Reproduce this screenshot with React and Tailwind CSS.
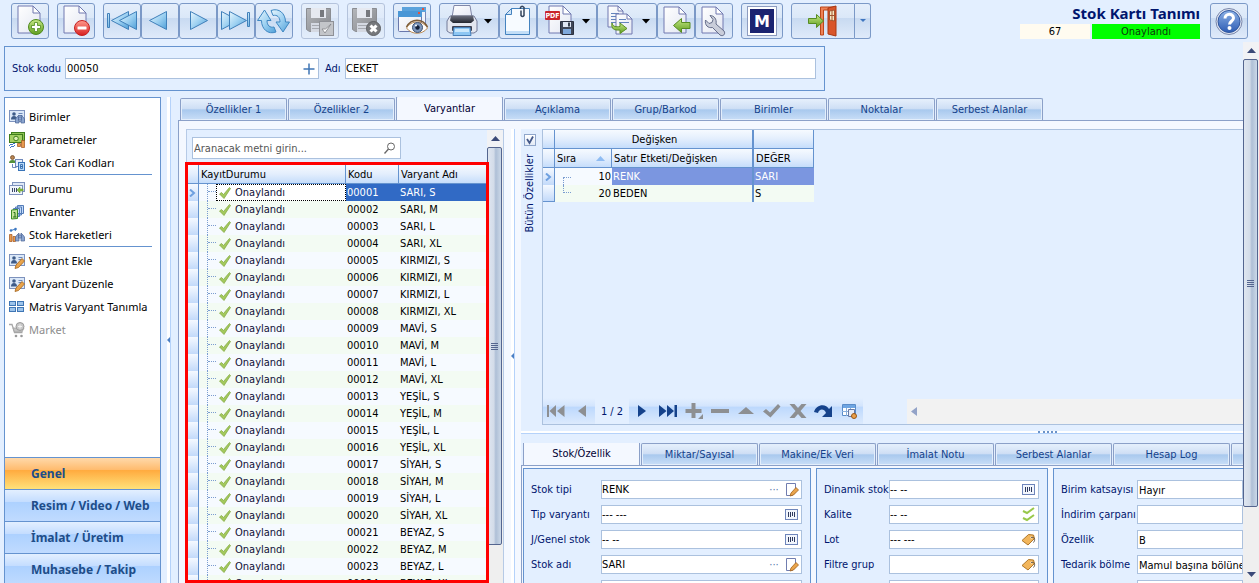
import React from "react";

const UI = "font-['DejaVu_Sans_Condensed','DejaVu_Sans',sans-serif]";
const SEGOE = "font-['Noto_Sans','Open_Sans',sans-serif]";

/* ---------- shared svg gradients ---------- */
function Defs() {
  return (
    <svg width="0" height="0" className="absolute" aria-hidden="true">
      <defs>
        <linearGradient id="page" x1="0" y1="0" x2="1" y2="1">
          <stop offset="0" stopColor="#ffffff" />
          <stop offset="1" stopColor="#e2e6f2" />
        </linearGradient>
        <linearGradient id="blue" x1="0" y1="0" x2="1" y2="1">
          <stop offset="0" stopColor="#e8f6fd" />
          <stop offset="0.5" stopColor="#9fd2f2" />
          <stop offset="1" stopColor="#4f9fd8" />
        </linearGradient>
        <linearGradient id="green" x1="0" y1="0" x2="0" y2="1">
          <stop offset="0" stopColor="#c6e886" />
          <stop offset="1" stopColor="#5f9e1e" />
        </linearGradient>
        <linearGradient id="red" x1="0" y1="0" x2="0" y2="1">
          <stop offset="0" stopColor="#ff9a8e" />
          <stop offset="1" stopColor="#d81e1e" />
        </linearGradient>
        <linearGradient id="grey" x1="0" y1="0" x2="1" y2="1">
          <stop offset="0" stopColor="#b5b7bb" />
          <stop offset="1" stopColor="#85878c" />
        </linearGradient>
        <linearGradient id="help" x1="0" y1="0" x2="0" y2="1">
          <stop offset="0" stopColor="#8db2e6" />
          <stop offset="1" stopColor="#2d5cb4" />
        </linearGradient>
        <linearGradient id="dark" x1="0" y1="0" x2="0" y2="1">
          <stop offset="0" stopColor="#6e7280" />
          <stop offset="1" stopColor="#22252e" />
        </linearGradient>
      </defs>
    </svg>
  );
}

function Page({ x = 6, y = 2, w = 22, h = 27, fold = 7 }) {
  return (
    <g stroke="#7079b0" strokeWidth="1" strokeLinejoin="round">
      <path d={`M${x} ${y}h${w - fold}l${fold} ${fold}v${h - fold}h${-w}z`} fill="url(#page)" />
      <path d={`M${x + w - fold} ${y}v${fold}h${fold}z`} fill="#fff" />
    </g>
  );
}

function Svg({ w = 36, h = 34, children }) {
  return (
    <svg width={w} height={h} viewBox={`0 0 ${w} ${h}`} className="block" aria-hidden="true">
      {children}
    </svg>
  );
}

const Floppy = () => (
  <g>
    <path d="M4.5 4.5h24v23h-21l-3-2z" fill="url(#grey)" stroke="#8b8d92" />
    <rect x="9" y="4" width="15" height="10" fill="#e6e9f0" />
    <rect x="18" y="6" width="4" height="7" fill="#77797e" />
    <rect x="9" y="19" width="14" height="9" fill="#d5d9e2" />
    <path d="M10 21.500h11M10 24.500h11" stroke="#a6a9b0" />
  </g>
);

const Down = ({ x }) => <path d={`M${x} 15h8l-4 4.500z`} fill="#000" />;

const tool = {
  add: (
    <Svg>
      <Page />
      <circle cx="24" cy="23" r="7.500" fill="url(#green)" stroke="#4f8a1c" />
      <path d="M22.500 18.500h3v3h3v3h-3v3h-3v-3h-3v-3h3z" fill="#fff" stroke="#4f8a1c" strokeWidth="0.800" />
    </Svg>
  ),
  remove: (
    <Svg>
      <Page />
      <circle cx="24" cy="24" r="7.500" fill="url(#red)" stroke="#c42020" />
      <rect x="19.500" y="22.500" width="9" height="3" rx="0.500" fill="#fff" />
    </Svg>
  ),
  first: (
    <Svg>
      <g fill="url(#blue)" stroke="#4080ba" strokeLinejoin="round">
        <rect x="3.500" y="9.500" width="2" height="14" />
        <path d="M24.500 7.500v18l-17-9z" />
        <path d="M32.500 7.500v18l-17-9z" />
      </g>
    </Svg>
  ),
  prev: (
    <Svg>
      <path d="M24.500 7.500v18l-17-9z" fill="url(#blue)" stroke="#4080ba" strokeLinejoin="round" />
    </Svg>
  ),
  next: (
    <Svg>
      <path d="M10.500 7.500v18l17-9z" fill="url(#blue)" stroke="#4080ba" strokeLinejoin="round" />
    </Svg>
  ),
  last: (
    <Svg>
      <g fill="url(#blue)" stroke="#4080ba" strokeLinejoin="round">
        <path d="M3.500 7.500v18l17-9z" />
        <path d="M11.500 7.500v18l17-9z" />
        <rect x="29.500" y="8.500" width="2" height="14" />
      </g>
    </Svg>
  ),
  refresh: (
    <Svg>
      <g fill="url(#blue)" stroke="#3f87c2" strokeLinejoin="round">
        <path d="M15 6.500c8-3 14.500 3 14.500 11.500h4l-6.500 10-7-10h4c0-5-3-7.500-7-6.500z" />
        <path d="M20 28c-8 3-14.500-3-14.500-11.500h-4l7-10.500 6.500 10.500h-4c0 5 3 7.500 7 6.500z" />
      </g>
    </Svg>
  ),
  save: (
    <Svg>
      <Floppy />
      <rect x="17.500" y="17.500" width="14" height="14" fill="#c3c5c9" stroke="#8e9096" />
      <path d="M20 25l3 4 6-9-5.500 5z" fill="#fff" stroke="#808287" strokeWidth="0.800" />
    </Svg>
  ),
  saveCancel: (
    <Svg>
      <Floppy />
      <circle cx="25.500" cy="24.500" r="7" fill="#77797d" stroke="#5e6064" />
      <path d="M22.500 21.500l6 6M28.500 21.500l-6 6" stroke="#fff" strokeWidth="3" />
    </Svg>
  ),
  preview: (
    <Svg>
      <rect x="8.500" y="3.500" width="23" height="20" rx="1" fill="#eef3fb" stroke="#7686b6" />
      <rect x="8" y="3" width="24" height="5" fill="#5ba3dc" />
      <rect x="4.500" y="7.500" width="23" height="20" rx="1" fill="url(#page)" stroke="#6a78ac" />
      <rect x="4" y="7" width="24" height="6" fill="#4a97d6" />
      <rect x="24" y="8" width="2" height="2" fill="#e5533d" />
      <rect x="28" y="4" width="2" height="2" fill="#e5533d" />
      <path d="M12.500 24c5-8 16-8 21 0-5 7-16 7-21 0z" fill="#fff" stroke="#b98a54" />
      <path d="M12.500 23c5-9 16-9 21 0" fill="none" stroke="#7c5c38" strokeWidth="1.500" />
      <circle cx="23.500" cy="23.500" r="5" fill="#7d97bd" stroke="#3e5373" />
      <circle cx="23.500" cy="23.500" r="2.200" fill="#12203a" />
      <circle cx="22" cy="21.500" r="1" fill="#fff" />
    </Svg>
  ),
  print: (
    <Svg w={58}>
      <path d="M14 1.500h16l2 12h-20z" fill="url(#page)" stroke="#8087a8" />
      <path d="M10 12h24l3 5v10l-3 2h-24l-3-2v-10z" fill="#e3e6ef" stroke="#737b99" />
      <path d="M11 11.500h22l1 5-3 2.500h-18l-3-2.500z" fill="url(#dark)" />
      <rect x="12" y="22" width="20" height="5" rx="1" fill="#3e4253" />
      <path d="M14 23.500h16l1 8h-18z" fill="#8dc6f3" stroke="#477fb8" />
      <path d="M15 25h14v3h-14z" fill="#cbe7fb" />
      <Down x={44} />
    </Svg>
  ),
  clip: (
    <Svg>
      <path d="M5.500 10.500l6-6h18v26h-24z" fill="#f7fbff" stroke="#4583bf" />
      <path d="M6 27h23v3h-23z" fill="#c3def7" />
      <path d="M5.500 10.500h6v-6z" fill="#cfe4f7" stroke="#4583bf" />
      <path d="M24 3v8.500M20.500 5v-1.500q1.500-2.500 3.500 0v8q-1.500 2-3 0v-5" fill="none" stroke="#34455e" strokeWidth="1.500" />
    </Svg>
  ),
  pdf: (
    <Svg w={58}>
      <Page x={11} y={2} w={22} h={27} fold={8} />
      <rect x="7" y="7" width="15" height="9" rx="1" fill="#c9252b" />
      <text x="14.500" y="14" textAnchor="middle" fontSize="7" fontWeight="700" fill="#fff" className="font-['DejaVu_Sans_Condensed',sans-serif]">PDF</text>
      <path d="M22.500 17.500h13v13h-11.500l-1.500-1.500z" fill="#3f4657" stroke="#2b3040" />
      <rect x="25" y="18" width="8" height="5" fill="#dfe6f3" />
      <rect x="30" y="18.500" width="2" height="4" fill="#39404f" />
      <rect x="25" y="25" width="8" height="5" fill="#7fa9dc" />
      <Down x={44} />
    </Svg>
  ),
  copy: (
    <Svg w={58}>
      <Page x={10} y={2} w={15} h={21} fold={5} />
      <path d="M13 9.500h8M13 12.500h8M13 15.500h8M13 18.500h8" stroke="#6484bd" />
      <Page x={18} y={10} w={16} h={20} fold={5} />
      <path d="M21 15.500h7M21 18.500h10" stroke="#6484bd" />
      <path d="M14 19c1 4 4 4 8 3.500v-3.500l7 5.500-7 5v-3.500c-6 .5-9-1-8-7z" fill="url(#green)" stroke="#5a8f24" />
      <Down x={44} />
    </Svg>
  ),
  importDoc: (
    <Svg>
      <Page x={6} y={3} w={22} h={26} />
      <path d="M15.500 21.500l8-7v4h8.500v6h-8.500v4z" fill="url(#green)" stroke="#568c22" strokeLinejoin="round" />
    </Svg>
  ),
  wrench: (
    <Svg>
      <Page x={6} y={3} w={21} h={26} />
      <path d="M14 11.500l3 4-1 3-3 1-3.500-3.500c-1 5 2.500 8.500 7 7.500l7.500 7.500c3 2 6-1 4-4l-8-7c1-5-2-8.500-6-8.500z" fill="#c9cdda" stroke="#656d8a" strokeLinejoin="round" />
    </Svg>
  ),
  exit: (
    <Svg w={62}>
      <path d="M28.500 31v-28h15v3h-12v25z" fill="#ee8256" stroke="#bd4719" />
      <path d="M36 4l8-2v30l-8-2z" fill="#d9552a" stroke="#a93812" />
      <path d="M37.500 7l5-1v11l-5-1z" fill="#f6e7c0" stroke="#a3552e" />
      <path d="M40 7v9.500M37.500 11.500h5" stroke="#a3552e" />
      <path d="M16.500 14.500h8v-4l7 6.500-7 6.500v-4h-8z" fill="url(#green)" stroke="#568c22" strokeLinejoin="round" />
    </Svg>
  ),
  help: (
    <Svg>
      <circle cx="18" cy="17.500" r="13" fill="#dfe5f1" stroke="#7a87aa" />
      <circle cx="18" cy="17.500" r="11" fill="url(#help)" stroke="#2f569e" />
      <path d="M14 14.500c0-5.500 8.500-5.500 8.500-.5 0 3-4 3.500-4 6.500" fill="none" stroke="#fff" strokeWidth="3" />
      <circle cx="18.500" cy="24" r="2" fill="#fff" />
    </Svg>
  ),
};

const BTN =
  "h-9 shrink-0 flex items-center justify-center rounded-[3px] border border-[#7b99c7] bg-[linear-gradient(#e4eefb_0%,#dbe8f8_40%,#c8daf1_42%,#dfeafa_100%)]";
const BTN_OFF =
  "h-9 shrink-0 flex items-center justify-center rounded-[3px] border border-[#b4c3dc] bg-[linear-gradient(#e6effb_0%,#dfeafa_40%,#d6e3f5_42%,#e3edfb_100%)]";

function ToolButton({ label, children, className = "w-[38px]", off }) {
  return (
    <button type="button" aria-label={label} disabled={off} className={(off ? BTN_OFF : BTN) + " " + className}>
      {children}
    </button>
  );
}

function Toolbar() {
  return (
    <header className="flex h-[42px] shrink-0 items-start justify-between pt-[3px] pr-[11px] pl-[11px]">
      <div className="flex gap-2">
        <ToolButton label="Yeni">{tool.add}</ToolButton>
        <ToolButton label="Sil">{tool.remove}</ToolButton>
        <div className="flex">
          <ToolButton label="İlk">{tool.first}</ToolButton>
          <ToolButton label="Önceki">{tool.prev}</ToolButton>
          <ToolButton label="Sonraki">{tool.next}</ToolButton>
          <ToolButton label="Son">{tool.last}</ToolButton>
          <ToolButton label="Yenile">{tool.refresh}</ToolButton>
        </div>
        <ToolButton label="Kaydet" off>{tool.save}</ToolButton>
        <ToolButton label="Vazgeç" off>{tool.saveCancel}</ToolButton>
        <ToolButton label="Önizleme">{tool.preview}</ToolButton>
        <div className="flex">
          <ToolButton label="Yazdır" className="w-[60px]">{tool.print}</ToolButton>
          <ToolButton label="Ekler">{tool.clip}</ToolButton>
          <ToolButton label="PDF kaydet" className="w-[60px]">{tool.pdf}</ToolButton>
          <ToolButton label="Kopyala" className="w-[60px]">{tool.copy}</ToolButton>
          <ToolButton label="İçe al">{tool.importDoc}</ToolButton>
          <ToolButton label="Ayarlar">{tool.wrench}</ToolButton>
        </div>
        <ToolButton label="M" className="w-[42px]">
          <span className="flex size-[30px] items-center justify-center border border-[#8d9cc0] bg-white">
            <span className="flex size-[24px] items-center justify-center bg-[#1a2370] font-['DejaVu_Sans',sans-serif] text-[16px] font-bold text-white">M</span>
          </span>
        </ToolButton>
        <div className="flex">
          <ToolButton label="Çıkış" className="w-[64px] rounded-r-none">{tool.exit}</ToolButton>
          <ToolButton label="Çıkış seçenekleri" className="w-[16px] rounded-l-none border-l-0">
            <svg width="6" height="4" viewBox="0 0 6 4" aria-hidden="true"><path d="M0 0h6l-3 3z" fill="#3f76c0" /></svg>
          </ToolButton>
        </div>
      </div>
      <div className="flex gap-[10px]">
        <div className="flex flex-col items-end">
          <h1 className={SEGOE + " h-[21px] text-[15px] leading-[20px] font-bold text-[#00156e]"}>Stok Kartı Tanımı</h1>
          <div className="flex gap-0.5 text-center leading-[15px]">
            <span className="h-[15px] w-[70px] bg-[#fffbf0] text-black">67</span>
            <span className="h-[15px] w-[108px] bg-[#00ff00] text-[#0c3a0c]">Onaylandı</span>
          </div>
        </div>
        <ToolButton label="Yardım">{tool.help}</ToolButton>
      </div>
    </header>
  );
}

/* ---------- scroll bars ---------- */
function VScroll({ thumb, down }) {
  return (
    <div className="flex w-4 shrink-0 flex-col bg-[#efefef]" aria-hidden="true">
      <div className="flex h-[17px] shrink-0 items-center justify-center bg-[#f1f2f5]">
        <svg width="9" height="5" viewBox="0 0 9 5"><path d="M0 5h9L4.500 0z" fill="#3b4a78" /></svg>
      </div>
      <div className={"mr-px flex items-center justify-center rounded-[2px] border border-[#54658f] bg-[linear-gradient(90deg,#dfe6f0_0%,#d3dce9_45%,#aebfd6_60%,#cbd8e8_100%)] " + thumb}>
        <svg width="7" height="7" viewBox="0 0 7 7"><path d="M0 .5h7M0 2.500h7M0 4.500h7M0 6.500h7" stroke="#54658f" /></svg>
      </div>
      {down && (
        <div className="mt-auto flex h-[17px] shrink-0 items-center justify-center">
          <svg width="9" height="5" viewBox="0 0 9 5"><path d="M0 0h9L4.500 5z" fill="#3b4a78" /></svg>
        </div>
      )}
    </div>
  );
}

/* ---------- side navigation ---------- */
const Card = () => (
  <g>
    <rect x="0.500" y="1.500" width="15" height="11" fill="#dbe8f8" stroke="#7d92bd" />
    <circle cx="5" cy="5" r="1.800" fill="#3d5b88" />
    <path d="M2 10.500q0-3.500 3-3.500t3 3.500z" fill="#3d5b88" />
    <path d="M9.500 4.500h4M9.500 6.500h4" stroke="#6c88b8" />
  </g>
);
const Binos = () => (
  <g fill="#8ba5cf" stroke="#4a6496" strokeWidth="0.700">
    <path d="M8 8l2-2v8h-3.500v-4zM14 8l-2-2v8h3.500v-4z" />
    <rect x="9.500" y="8" width="3" height="3" />
  </g>
);
const Pencil = () => (
  <path d="M6 15.500l1-3.500 6-6.500 2.500 2.500-6 6.500z" fill="#e9a44b" stroke="#a3621b" strokeWidth="0.800" />
);

const navIcon = {
  birim: (<><Card /><Binos /></>),
  param: (
    <>
      <rect x="2.500" y="0.500" width="13" height="8" fill="#8cc152" stroke="#3f7d1c" />
      <rect x="0.500" y="2.500" width="13" height="8" fill="#a4d065" stroke="#3f7d1c" />
      <circle cx="7" cy="6.500" r="2.300" fill="#dff0b8" stroke="#3f7d1c" />
      <path d="M8.500 14.500v-3h3v3zM12.500 15.500v-7h3v7z" fill="#e89a4d" stroke="#a2551c" strokeWidth="0.700" />
      <path d="M0 14l2-2 1 1 2-2 1 1M1 16l2-2 1 1 2-2" fill="none" stroke="#3b73c5" />
    </>
  ),
  cari: (
    <>
      <circle cx="3.500" cy="2.500" r="2" fill="#b78352" stroke="#67431f" strokeWidth="0.700" />
      <path d="M0 8q0-3 3.500-3t3.500 3z" fill="#55913a" />
      <rect x="6.500" y="4.500" width="7" height="7" fill="#e8effa" stroke="#7089bb" />
      <rect x="9.500" y="7.500" width="6" height="8" fill="#b9d8f6" stroke="#3974b8" />
      <path d="M11.500 9.500h2v2h-2zM11.500 11.500h2v2h-2z" fill="none" stroke="#2a62a6" strokeWidth="0.800" />
      <path d="M3.500 9v3.500h4" fill="none" stroke="#7089bb" />
    </>
  ),
  durum: (
    <>
      <rect x="3.500" y="1.500" width="12" height="9" fill="#dfe8f6" stroke="#7d92bd" />
      <rect x="0.500" y="4.500" width="13" height="9" fill="#f1f5fc" stroke="#7d92bd" />
      <path d="M3.500 7v4M5.500 7v4M7.500 7v4" stroke="#3a4766" />
      <path d="M8 9l3-3v2h3v2h-3v2z" fill="#85bd3e" stroke="#5b8f24" strokeWidth="0.500" />
    </>
  ),
  envanter: (
    <>
      <path d="M8.500 1.500h6v8h-6zM6.500 3h6v8h-6zM4.500 4.500h6v8h-6z" fill="#c2dafa" stroke="#547cb8" />
      <path d="M2.500 6l6-.5v9l-6 .5z" fill="#c5e59a" stroke="#3c8a24" />
      <path d="M4.500 8.500h1.500v4.500M4 13h3.500" fill="none" stroke="#246d14" />
    </>
  ),
  hareket: (
    <>
      <path d="M2 3.500l3-1 2 1" fill="none" stroke="#3d79c2" />
      <circle cx="2" cy="3.500" r="1.300" fill="#3d79c2" /><circle cx="6.500" cy="2" r="1.300" fill="#3d79c2" />
      <path d="M.5 14.500v-7h2.500v7zM4 14.500v-5h2.500v5z" fill="#e89a4d" stroke="#a2551c" strokeWidth="0.700" />
      <Binos />
    </>
  ),
  kalem: (<><Card /><Pencil /></>),
  matris: (
    <g fill="#9cc3ea" stroke="#3f76b5">
      <rect x="0.500" y="2.500" width="6" height="4" /><rect x="8.500" y="2.500" width="6" height="4" />
      <rect x="0.500" y="8.500" width="6" height="4" /><rect x="8.500" y="8.500" width="6" height="4" />
    </g>
  ),
  market: (
    <>
      <path d="M0 2.500h3l2.500 8h8" fill="none" stroke="#a9a9a9" strokeWidth="1.300" />
      <path d="M4 6h11l-2 4h-7.500z" fill="#c4c4c4" stroke="#9e9e9e" strokeWidth="0.700" />
      <circle cx="11" cy="4.500" r="4" fill="#c9c9c9" stroke="#9c9c9c" />
      <path d="M9 4.500h4M11 2.500v4" stroke="#f2f2f2" />
      <circle cx="7" cy="14" r="1.300" fill="#999" /><circle cx="12.500" cy="14" r="1.300" fill="#999" />
    </>
  ),
};

const NAV = [
  [["birim", "Birimler"], ["param", "Parametreler"], ["cari", "Stok Cari Kodları"]],
  [["durum", "Durumu"], ["envanter", "Envanter"], ["hareket", "Stok Hareketleri"]],
  [["kalem", "Varyant Ekle"], ["kalem", "Varyant Düzenle"], ["matris", "Matris Varyant Tanımla"], ["market", "Market"]],
];

const GROUPS = ["Genel", "Resim / Video / Web", "İmalat / Üretim", "Muhasebe / Takip"];

function SideNav() {
  return (
    <aside className={SEGOE + " flex w-[157px] shrink-0 flex-col border border-b-0 border-[#6593cf] bg-white"}>
      <nav className="flex flex-1 flex-col pt-[7px] text-[11px]">
        {NAV.map((group, g) => (
          <ul key={g} className={g < 2 ? "mb-0.5" : ""}>
            {group.map(([icon, label]) => (
              <li key={label}>
                <a href="#" className={"flex h-[23px] items-center gap-1 pl-[4px] whitespace-nowrap " + (icon === "market" ? "text-[#8d8d8d]" : "text-black")}>
                  <svg width="16" height="16" viewBox="0 0 16 16" className="shrink-0" aria-hidden="true">{navIcon[icon]}</svg>
                  {label}
                </a>
              </li>
            ))}
            {g < 2 && <li aria-hidden="true" className="mr-2 ml-6 h-px bg-[#6593cf]" />}
          </ul>
        ))}
      </nav>
      <div className="h-[126px] shrink-0">
        {GROUPS.map((g, i) => (
          <button
            key={g}
            type="button"
            className={
              "flex h-8 w-full items-center border-t border-[#6593cf] pl-[26px] text-[12px] font-bold whitespace-nowrap text-[#204d89] " +
              (i === 0
                ? "bg-[linear-gradient(#ffd9aa_0%,#ffbb6e_38%,#ffab3f_40%,#fee17a_100%)]"
                : "bg-[linear-gradient(#e3efff_0%,#c4ddff_38%,#add1ff_40%,#c0dbff_100%)]")
            }
          >
            {g}
          </button>
        ))}
      </div>
    </aside>
  );
}

/* ---------- tabs ---------- */
function Tabs({ items, active, width, className }) {
  return (
    <div role="tablist" className={"flex shrink-0 items-end gap-px overflow-hidden " + className}>
      {items.map((t, i) => (
        <button
          key={i}
          type="button"
          role="tab"
          aria-selected={i === active}
          className={
            "shrink-0 rounded-t-[2px] border border-b-0 border-[#8ba0c8] text-center " + width + " " +
            (i === active
              ? "h-[24px] bg-[#f4f8ff] text-[#000033]"
              : "h-[22px] bg-[linear-gradient(#e6f0fc_0%,#cfdff5_45%,#a9c9ee_52%,#c9def7_100%)] text-[#15428b] shadow-[inset_0_0_0_1px_#e3eefb]")
          }
        >
          {t}
        </button>
      ))}
    </div>
  );
}

/* ---------- variant list ---------- */
const COLORS = ["SARI", "KIRMIZI", "MAVİ", "YEŞİL", "SİYAH", "BEYAZ"];
const SIZES = ["S", "M", "L", "XL"];
const VARIANTS = COLORS.flatMap((c) => SIZES.map((s) => `${c}, ${s}`)).map((name, i) => ({
  code: String(i + 1).padStart(5, "0"),
  name,
}));

const HEAD = "border-r border-b border-[#6593cf] bg-[linear-gradient(#f6faff_0%,#e3eefd_50%,#c5ddfb_100%)] p-0 pl-0.5 text-left font-normal text-black whitespace-nowrap";
const GUTTER = "border-r border-[#6593cf] bg-[linear-gradient(#f5f9ff_0%,#c3dafa_100%)] p-0";

const Pointer = () => (
  <svg width="7" height="8" viewBox="0 0 7 8" className="mx-auto block" aria-hidden="true"><path d="M1 .5L5 4 1 7.500" fill="none" stroke="#6ea0e0" strokeWidth="2" /></svg>
);
const Tick = () => (
  <svg width="12" height="12" viewBox="0 0 12 12" className="shrink-0" aria-hidden="true">
    <path d="M.5 7l2-1.500 2 2L10.500.5 11.500 1.500 5 11.500z" fill="#a3c95c" stroke="#86ab48" strokeWidth="0.800" />
  </svg>
);

function VariantTable() {
  return (
    <table className="w-full table-fixed border-separate border-spacing-0">
      <colgroup>
        <col className="w-[12px]" />
        <col className="w-[147px]" />
        <col className="w-[53px]" />
        <col />
      </colgroup>
      <thead>
        <tr className="h-[19px]">
          <th className={HEAD} aria-label="İşaret" />
          <th className={HEAD}>KayıtDurumu</th>
          <th className={HEAD}>Kodu</th>
          <th className={HEAD}>Varyant Adı</th>
        </tr>
      </thead>
      <tbody>
        {VARIANTS.map((v, i) => (
          <tr key={v.code} className={"h-[17px] " + (i === 0 ? "bg-[#316ac5] text-white" : i % 2 ? "bg-[#f3fbf3] text-black" : "bg-[#f6faff] text-black")}>
            <td className={GUTTER}>{i === 0 && <Pointer />}</td>
            <td className={"p-0 text-[#101038] " + (i === 0 ? "bg-[#f6faff]" : "")}>
              <div className="flex h-[17px] pl-2">
                <span className="w-px border-l border-dotted border-[#7a9cd0]" />
                <span className="h-2 w-2 border-b border-dotted border-[#7a9cd0]" />
                <span className={"flex flex-1 items-center gap-1 border border-dotted pl-0.5 " + (i === 0 ? "border-black bg-white" : "border-transparent")}>
                  <Tick />
                  Onaylandı
                </span>
              </div>
            </td>
            <td className="p-0 pl-px">{v.code}</td>
            <td className="p-0 pl-px">{v.name}</td>
          </tr>
        ))}
      </tbody>
    </table>
  );
}

function VariantPanel() {
  return (
    <section className="flex w-[318px] shrink-0 border border-b-0 border-[#b6cae6] bg-[#e3efff]">
      <div className="flex min-w-0 flex-1 flex-col">
        <div className="mt-[7px] mr-[86px] mb-[3px] ml-[5px] flex h-[22px] shrink-0 items-center border border-[#abc1de] bg-white">
          <input aria-label="Ara" placeholder="Aranacak metni girin..." className="min-w-0 flex-1 pl-px outline-none placeholder:text-[#555]" />
          <svg width="12" height="12" viewBox="0 0 12 12" className="mr-1 shrink-0" aria-hidden="true">
            <circle cx="7" cy="4.500" r="3.500" fill="none" stroke="#666" /><path d="M4.500 7l-4 4.500" stroke="#666" strokeWidth="1.300" />
          </svg>
        </div>
        <div className="relative flex min-h-0 flex-1 flex-col pt-[3px]">
          <div className="min-h-0 flex-1 overflow-hidden bg-white">
            <VariantTable />
          </div>
          <div className="pointer-events-none absolute inset-y-0 -right-0.5 -left-0.5 border-[3px] border-[#ff0000]" />
        </div>
      </div>
      <VScroll thumb="h-[398px]" />
    </section>
  );
}

function VSplit() {
  return (
    <div className="flex w-1 shrink-0 items-center border-r border-[#b5d2fa] bg-white" aria-hidden="true">
      <svg width="3" height="6" viewBox="0 0 3 6"><path d="M3 0v6L0 3z" fill="#4a7fc4" /></svg>
    </div>
  );
}

/* ---------- attribute grid ---------- */
function AttributeGrid() {
  return (
    <table className="w-[271px] table-fixed border-separate border-spacing-0">
      <colgroup>
        <col className="w-[12px]" />
        <col className="w-[57px]" />
        <col className="w-[142px]" />
        <col className="w-[60px]" />
      </colgroup>
      <thead>
        <tr className="h-[19px]">
          <th className={HEAD} aria-label="İşaret" />
          <th colSpan={2} className={HEAD + " border-r-2"}><span className="block text-center">Değişken</span></th>
          <th className={HEAD} aria-label="Değer grubu" />
        </tr>
        <tr className="h-[19px]">
          <th className={HEAD} aria-label="İşaret" />
          <th className={HEAD}>
            <span className="flex items-center justify-between pr-1.5">
              Sıra
              <svg width="9" height="5" viewBox="0 0 9 5" aria-hidden="true"><path d="M0 5h9L4.500 0z" fill="#8fbcf3" /></svg>
            </span>
          </th>
          <th className={HEAD + " border-r-2"}>Satır Etketi/Değişken</th>
          <th className={HEAD}>DEĞER</th>
        </tr>
      </thead>
      <tbody>
        <tr className="h-[17px] bg-[#7b96e0] text-white">
          <td className={GUTTER}><Pointer /></td>
          <td className="bg-[#f6faff] p-0 text-black">
            <div className="flex h-[17px] items-center justify-between pr-px pl-2">
              <span className="h-2 w-2 self-end border-t border-l border-dotted border-[#7a9cd0]" />
              10
            </div>
          </td>
          <td className="border-r-2 border-[#6593cf] p-0 pl-px">RENK</td>
          <td className="p-0 pl-px">SARI</td>
        </tr>
        <tr className="h-[17px] bg-[#f3fbf3] text-black">
          <td className={GUTTER + " border-b"} />
          <td className="p-0">
            <div className="flex h-[17px] items-center justify-between pr-px pl-2">
              <span className="h-2 w-2 self-start border-b border-l border-dotted border-[#7a9cd0]" />
              20
            </div>
          </td>
          <td className="border-r-2 border-[#6593cf] p-0 pl-px">BEDEN</td>
          <td className="p-0 pl-px">S</td>
        </tr>
      </tbody>
    </table>
  );
}

const NAVBG = "flex h-[26px] bg-[linear-gradient(#e3efff_0%,#d2e4fd_32%,#bcd8fd_34%,#dceafd_100%)]";

function NavButton({ label, children }) {
  return (
    <button type="button" aria-label={label} className="flex w-[26px] items-center justify-center">
      <svg width="20" height="18" viewBox="0 0 20 18" aria-hidden="true">{children}</svg>
    </button>
  );
}

function Navigator() {
  const G = "#8d8f92";
  const B = "#15428b";
  return (
    <div className="flex items-end justify-between">
      <div className="flex items-center">
        <div className={NAVBG}>
          <NavButton label="İlk kayıt"><path d="M1 3h2v12H1zM10 3v12L3.500 9zM18.500 3v12L11 9z" fill={G} /></NavButton>
          <NavButton label="Önceki kayıt"><path d="M14 3v12L6 9z" fill={G} /></NavButton>
        </div>
        <span className="w-[34px] text-center text-[#00156e]">1 / 2</span>
        <div className={NAVBG}>
          <NavButton label="Sonraki kayıt"><path d="M6 3v12l8-6z" fill={B} /></NavButton>
          <NavButton label="Son kayıt"><path d="M1 3v12l7.500-6zM9 3v12l7-6zM16.500 3h2.500v12h-2.500z" fill={B} /></NavButton>
          <NavButton label="Ekle"><path d="M7.500 1h4v6h6v4h-6v5h-4v-5h-6V7h6zM19 12v5h-5z" fill={G} /></NavButton>
          <NavButton label="Çıkar"><path d="M1 7h18v4H1z" fill={G} /></NavButton>
          <NavButton label="Düzenle"><path d="M2 12h16l-8-7z" fill={G} /></NavButton>
          <NavButton label="Onayla"><path d="M1 9.500L4 7l4 3.500L16 2l2.500 2.500L8.500 15.500z" fill={G} /></NavButton>
          <NavButton label="İptal"><path d="M1.500 2h5L10 6l3.500-4h5l-6 7 6 7h-5L10 12l-3.500 4h-5l6-7z" fill={G} /></NavButton>
          <NavButton label="Yenile"><path d="M0 10C2 2 12 1 15 7l3-3v11H8l4-4C10 6 5 7 4 11z" fill={B} /></NavButton>
          <NavButton label="Tablo">
            <path d="M2.500 2.500h13v11h-13z" fill="#fff" stroke="#5a8cc9" />
            <path d="M3 3h12v3H3z" fill="#6ea5e2" />
            <path d="M2 9.500h13M6.500 6v8M10.500 6v8" stroke="#8aaedb" />
            <path d="M8.500 7.500h6v7h-6z" fill="#e6ecf7" stroke="#6779a5" />
            <circle cx="14" cy="14" r="2.500" fill="#e9a04a" stroke="#9a5615" />
          </NavButton>
        </div>
      </div>
      <div className="flex h-[25px] w-[336px] items-center bg-[#f2f2f2] pl-1" aria-hidden="true">
        <svg width="6" height="9" viewBox="0 0 6 9"><path d="M6 0v9L0 4.500z" fill="#93a3c8" /></svg>
      </div>
    </div>
  );
}

/* ---------- detail form ---------- */
const fieldIcon = {
  edit: (
    <>
      <path d="M2.500 1.500h9v9l-3 3h-6z" fill="#fff" stroke="#707db0" />
      <path d="M6 14l1-3 5-5.500 2.500 2.500-5 5z" fill="#e9a44b" stroke="#a3621b" strokeWidth="0.800" />
    </>
  ),
  code: (
    <>
      <rect x="1.500" y="2.500" width="12" height="10" fill="#f2f6fd" stroke="#6f86bb" />
      <path d="M4.500 5v5M6.500 5v5M8.500 5v4M10.500 5v5" stroke="#303b5e" />
    </>
  ),
  checks: (
    <path d="M2 4l4 2 7-5M2 11l4 2 7-5" fill="none" stroke="#98c84a" strokeWidth="2" />
  ),
  tag: (
    <>
      <path d="M1 8.500L7.500 2.500l5 .5 1 3.500L7 13z" fill="#f2b65c" stroke="#a66c1c" strokeWidth="0.900" />
      <circle cx="10.500" cy="5.500" r="1" fill="#fff" />
      <path d="M10 5.500c3-1 5 2 2.500 5" fill="none" stroke="#51473a" strokeWidth="0.900" />
    </>
  ),
};

function Field({ label, value, icon, dots, labelWidth, id }) {
  return (
    <div className="flex h-[19px] items-center">
      <label htmlFor={id} className={"shrink-0 whitespace-nowrap text-[#00156e] " + labelWidth}>{label}</label>
      <div className="flex h-[19px] min-w-0 flex-1 items-center border border-[#abc1de] bg-white">
        <input id={id} defaultValue={value} className="min-w-0 flex-1 text-black outline-none" />
        {dots && <button type="button" aria-label={label + " seç"} className="mr-1 w-3 text-[#5477ad]">···</button>}
        {icon && (
          <button type="button" aria-label={label + " aç"} className="mr-0.5 shrink-0">
            <svg width="15" height="15" viewBox="0 0 15 15" aria-hidden="true">{fieldIcon[icon]}</svg>
          </button>
        )}
      </div>
    </div>
  );
}

const FORM = [
  {
    box: "w-[288px]", lw: "w-[70px]", pad: "pl-[7px] pr-2",
    rows: [["Stok tipi", "RENK", "edit", true], ["Tip varyantı", "--- ---", "code"], ["J/Genel stok", "-- --", "code"], ["Stok adı", "SARI", "edit", true], ["", "", null]],
  },
  {
    box: "w-[232px]", lw: "w-[65px]", pad: "pl-[7px] pr-2",
    rows: [["Dinamik stok", "-- --", "code"], ["Kalite", "-- --", "checks"], ["Lot", "--- ---", "tag"], ["Filtre grup", "", "tag"], ["", "", null]],
  },
  {
    box: "flex-1 border-r-0", lw: "w-[76px]", pad: "pl-[7px] pr-0 [&_input]:pt-0.5 [&_input]:pl-px",
    rows: [["Birim katsayısı", "Hayır"], ["İndirim çarpanı", ""], ["Özellik", "B"], ["Tedarik bölme", "Mamul başına bölüne"], ["", ""]],
  },
];

function DetailForm() {
  return (
    <div className="flex min-h-0 flex-1 gap-[5px] overflow-hidden border-t border-l border-[#8ba0c8] bg-[#f4f8ff] pt-0.5 pl-px">
      {FORM.map((f, k) => (
        <div key={k} className={"flex min-w-0 shrink-0 flex-col gap-1.5 border border-b-0 border-[#6593cf] bg-[#e3efff] pt-[11px] " + f.box + " " + f.pad}>
          {f.rows.map(([label, value, icon, dots], i) => (
            <Field key={i} id={`f${k}-${i}`} label={label} value={value} icon={icon} dots={dots} labelWidth={f.lw} />
          ))}
        </div>
      ))}
    </div>
  );
}

export default function App() {
  return (
    <div className={UI + " flex h-screen flex-col overflow-hidden bg-[#e3efff] text-[11px] leading-[15px]"}>
      <Defs />
      <Toolbar />
      <div className="flex min-h-0 flex-1">
        <div className="flex min-w-0 flex-1 flex-col pt-1">
          <form className="ml-1 flex h-[45px] w-full max-w-[821px] shrink-0 items-center border border-[#6593cf] pr-2 pl-[7px] text-[#00156e]">
            <label htmlFor="kod" className="w-[53px]">Stok kodu</label>
            <div className="flex h-[21px] w-[254px] items-center border border-[#abc1de] bg-white">
              <input id="kod" defaultValue="00050" className="min-w-0 flex-1 pl-px text-black outline-none" />
              <button type="button" aria-label="Kod ekle" className="mr-[3px]">
                <svg width="12" height="12" viewBox="0 0 12 12" className="block" aria-hidden="true"><path d="M6 .5v11M.5 6h11" stroke="#3f76b5" strokeWidth="1.500" /></svg>
              </button>
            </div>
            <label htmlFor="ad" className="ml-1.5 w-5">Adı</label>
            <input id="ad" defaultValue="CEKET" className="h-[21px] min-w-0 flex-1 border border-[#abc1de] bg-white text-black outline-none" />
          </form>

          <div className="mt-1.5 flex min-h-0 flex-1 pl-1">
            <SideNav />
            <div className="flex shrink-0 pr-[7px] pl-1.5">
              <VSplit />
            </div>
            <main className="flex min-w-0 flex-1 flex-col">
              <Tabs
                items={["Özellikler 1", "Özellikler 2", "Varyantlar", "Açıklama", "Grup/Barkod", "Birimler", "Noktalar", "Serbest Alanlar"]}
                active={2}
                width="w-[107px]"
                className="h-[23px] pl-0.5"
              />
              <div className="flex min-h-0 flex-1 border-t border-l border-[#8ba0c8] bg-[#f4f8ff] pt-2 pl-[7px]">
                <VariantPanel />
                <div className="flex shrink-0 pr-1.5 pl-[7px]">
                  <VSplit />
                </div>
                <div className="flex min-w-0 flex-1 flex-col">
                  <div className="flex h-[296px] shrink-0">
                    <div className="flex w-[21px] shrink-0 flex-col items-center gap-2 bg-[#e3efff] pt-[5px] pr-1">
                      <span className="relative size-3 shrink-0">
                        <input id="all" type="checkbox" defaultChecked className="peer block size-3 appearance-none border border-[#8fa6cb] bg-[linear-gradient(#fff,#e4ebf6)]" />
                        <svg width="12" height="12" viewBox="0 0 12 12" className="pointer-events-none absolute inset-0 hidden peer-checked:block" aria-hidden="true">
                          <path d="M3 5l2.500 4L9 2.500" fill="none" stroke="#44598a" strokeWidth="1.800" />
                        </svg>
                      </span>
                      <label htmlFor="all" className="rotate-180 whitespace-nowrap text-[#00156e] [writing-mode:vertical-rl]">Bütün Özellikler</label>
                    </div>
                    <div className="flex min-w-0 flex-1 flex-col justify-between border border-r-0 border-[#abc1de] bg-[#e3efff]">
                      <AttributeGrid />
                      <Navigator />
                    </div>
                  </div>
                  <div className="flex h-[18px] shrink-0 flex-col bg-[#e3efff] pt-1.5" aria-hidden="true">
                    <div className="flex h-[3px] border-t-2 border-b border-t-white border-b-[#b5d2fa] pl-[517px]">
                      <span className="-mt-0.5 h-0.5 w-[19px] border-t-2 border-dotted border-[#6c93c8]" />
                    </div>
                  </div>
                  <div className="flex min-h-0 flex-1 flex-col bg-[#e3efff]">
                    <Tabs
                      items={["Stok/Özellik", "Miktar/Sayısal", "Makine/Ek Veri", "İmalat Notu", "Serbest Alanlar", "Hesap Log", ""]}
                      active={0}
                      width="w-[117px]"
                      className="h-[22px] pl-0.5"
                    />
                    <DetailForm />
                  </div>
                </div>
              </div>
            </main>
          </div>
        </div>
        <VScroll thumb="h-[448px]" down />
      </div>
    </div>
  );
}
